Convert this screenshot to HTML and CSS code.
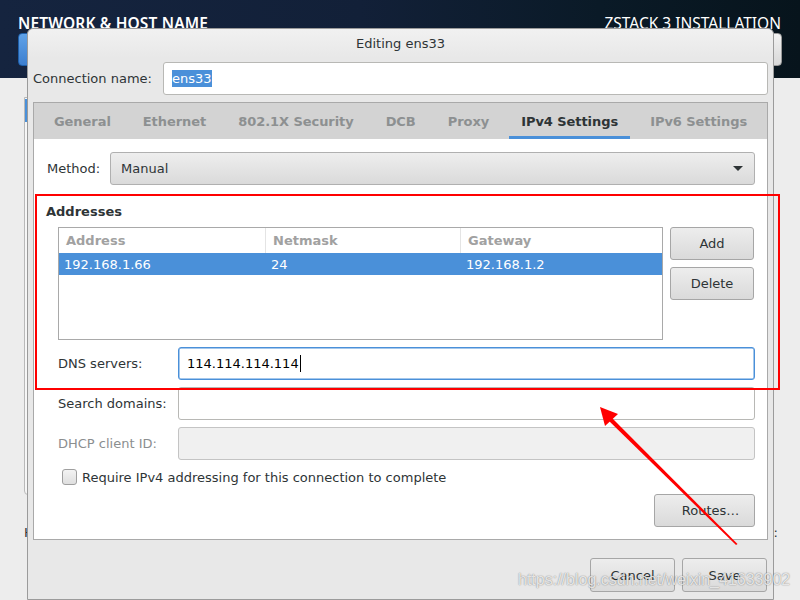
FILE: index.html
```html
<!DOCTYPE html>
<html>
<head>
<meta charset="utf-8">
<title>Editing ens33</title>
<link rel="stylesheet" href="styles.css">
</head>
<body>
<div class="desktop">
  <header class="topbar">
    <div class="topbar-row">
      <h1 class="spoke-title">NETWORK &amp; HOST NAME</h1>
      <span class="product">ZSTACK 3 INSTALLATION</span>
    </div>
    <div class="topbar-row2">
      <button class="done-btn">Done</button>
      <button class="kbd-btn">us</button>
    </div>
  </header>
  <main class="spoke">
    <div class="devlist"><div class="devsel"></div></div>
    <div class="hostrow"><span>Host name:</span><span>Current host name:</span></div>
  </main>
</div>

<div class="dialog">
  <div class="titlebar">Editing ens33</div>
  <div class="dlg-body">
    <div class="conn-row">
      <span class="conn-label">Connection name:</span>
      <div class="entry"><span class="sel-text">ens33</span></div>
    </div>

    <div class="notebook">
      <div class="tabs">
        <div class="tab">General</div>
        <div class="tab">Ethernet</div>
        <div class="tab">802.1X Security</div>
        <div class="tab">DCB</div>
        <div class="tab">Proxy</div>
        <div class="tab active">IPv4 Settings</div>
        <div class="tab">IPv6 Settings</div>
      </div>
      <div class="page">
        <div class="method-row">
          <span class="method-label">Method:</span>
          <div class="combo"><span>Manual</span><span class="combo-arrow"></span></div>
        </div>

        <div class="addr-title">Addresses</div>
        <div class="addr-area">
          <div class="addr-table">
            <div class="thead">
              <div class="th c1">Address</div>
              <div class="th c2">Netmask</div>
              <div class="th c3">Gateway</div>
            </div>
            <div class="trow selected">
              <div class="td c1">192.168.1.66</div>
              <div class="td c2">24</div>
              <div class="td c3">192.168.1.2</div>
            </div>
          </div>
          <div class="side-btns">
            <button class="btn">Add</button>
            <button class="btn">Delete</button>
          </div>
        </div>

        <div class="form-rows">
          <div class="form-row">
            <span class="form-label">DNS servers:</span>
            <div class="entry focus"><span>114.114.114.114</span><span class="caret"></span></div>
          </div>
          <div class="form-row">
            <span class="form-label">Search domains:</span>
            <div class="entry"></div>
          </div>
          <div class="form-row">
            <span class="form-label disabled">DHCP client ID:</span>
            <div class="entry disabled-entry"></div>
          </div>
        </div>

        <div class="check-row">
          <span class="checkbox"></span>
          <span>Require IPv4 addressing for this connection to complete</span>
        </div>

        <div class="routes-row">
          <button class="btn routes-btn">Routes…</button>
        </div>
      </div>
    </div>

    <div class="actions">
      <button class="btn action-btn">Cancel</button>
      <button class="btn action-btn">Save</button>
    </div>
  </div>
</div>

<div class="red-box"></div>
<svg class="arrow" width="800" height="600" viewBox="0 0 800 600">
  <polygon points="737.5,544 736,545 608,420 611,417" fill="#ff0000"/>
  <polygon points="600,407 618,414 605,426" fill="#ff0000"/>
</svg>
<div class="watermark">https://blog.csdn.net/weixin_41633902</div>
</body>
</html>
```

FILE: styles.css
```css
html, body {
  margin: 0;
  padding: 0;
}

body {
  width: 800px;
  height: 600px;
  overflow: hidden;
  position: relative;
  font-family: "DejaVu Sans", sans-serif;
  font-size: 13px;
  color: #2e3436;
  background: #ececec;
}

button {
  font-family: "DejaVu Sans", sans-serif;
  font-size: 13px;
  color: #2e3436;
}

/* ---------- background installer screen ---------- */
.desktop {
  height: 600px;
  display: flex;
  flex-direction: column;
}

.topbar {
  height: 78px;
  box-sizing: border-box;
  padding: 12px 18px 0 18px;
  background: linear-gradient(90deg, #15243f 0%, #122038 45%, #0a1a27 75%, #07141c 100%);
  color: #ffffff;
}

.topbar-row {
  display: flex;
  justify-content: space-between;
  align-items: center;
  height: 21px;
}

.spoke-title {
  margin: 0;
  font-family: "Noto Sans", sans-serif;
  font-weight: 600;
  font-size: 15.5px;
  letter-spacing: 0.15px;
}

.product {
  font-family: "Noto Sans", sans-serif;
  font-size: 15.5px;
  margin-right: 1px;
}

.topbar-row2 {
  display: flex;
  justify-content: space-between;
}

.done-btn {
  width: 80px;
  height: 33px;
  border: 1px solid #1d5ea8;
  border-radius: 4px;
  background: linear-gradient(#5fa2e8, #3d7fcf);
  color: #fff;
}

.kbd-btn {
  width: 90px;
  height: 33px;
  border: 1px solid #999;
  border-radius: 4px;
  background: linear-gradient(#f2f2f2, #d8d8d8);
}

.spoke {
  flex: 1;
  padding: 19px 18px 0 24px;
  background: #ededed;
}

.devlist {
  width: 300px;
  height: 398px;
  box-sizing: border-box;
  border: 1px solid #b9b9b9;
  border-radius: 0 0 4px 4px;
  background: #f6f6f6;
  padding-top: 1px;
}

.devsel {
  height: 23px;
  background: #4a90d9;
}

.hostrow {
  margin-top: 30px;
  display: flex;
  justify-content: space-between;
  padding-right: 4px;
}

/* ---------- dialog window ---------- */
.dialog {
  position: absolute;
  left: 27px;
  top: 28px;
  width: 747px;
  height: 572px;
  box-sizing: border-box;
  border: 1px solid #9b9b9b;
  border-radius: 6px 6px 0 0;
  background: #e8e8e8;
  display: flex;
  flex-direction: column;
}

.titlebar {
  height: 29px;
  display: flex;
  align-items: center;
  justify-content: center;
  border-radius: 6px 6px 0 0;
  background: linear-gradient(#f1f1f1, #e8e8e8);
  color: #2e3436;
}

.dlg-body {
  padding: 4px 5px 0 5px;
  display: flex;
  flex-direction: column;
}

.conn-row {
  display: flex;
  align-items: center;
  height: 33px;
}

.conn-label {
  width: 130px;
  flex: none;
}

.entry {
  flex: 1;
  height: 33px;
  box-sizing: border-box;
  border: 1px solid #b8b8b5;
  border-radius: 3px;
  background: #ffffff;
  padding: 0 8px;
  display: flex;
  align-items: center;
  color: #000;
}

.sel-text {
  background: #4a90d9;
  color: #ffffff;
  padding: 1px 0 1px 0;
  line-height: 15px;
}

.entry.focus {
  border-color: #4a90d9;
  box-shadow: inset 0 0 0 0.5px #4a90d9;
}

.caret {
  display: inline-block;
  width: 1px;
  height: 17px;
  background: #000;
  margin-left: 1px;
}

.entry.disabled-entry {
  background: #f0f0f0;
  border-color: #c4c4c4;
}

/* ---------- notebook ---------- */
.notebook {
  margin-top: 7px;
  border: 1px solid #a9a9a9;
  background: #ffffff;
}

.tabs {
  display: flex;
  gap: 8px;
  padding-left: 8px;
  height: 36px;
  background: #d3d3d3;
}

.tab {
  padding: 3px 12px 0 12px;
  box-sizing: border-box;
  display: flex;
  align-items: center;
  font-weight: bold;
  color: #8d9091;
  letter-spacing: -0.06px;
  border-bottom: 3px solid transparent;
}

.tab.active {
  color: #2e3436;
  border-bottom-color: #4a90d9;
}

.page {
  padding: 13px 12px 12px 13px;
}

.method-row {
  display: flex;
  align-items: center;
}

.method-label {
  width: 63px;
  flex: none;
}

.combo {
  flex: 1;
  height: 33px;
  box-sizing: border-box;
  border: 1px solid #b0b0b0;
  border-radius: 3px;
  background: linear-gradient(#eeeeee, #dadada);
  display: flex;
  align-items: center;
  justify-content: space-between;
  padding: 0 10px;
}

.combo-arrow {
  width: 0;
  height: 0;
  border-left: 5px solid transparent;
  border-right: 5px solid transparent;
  border-top: 5px solid #2e3436;
  margin-right: 1px;
}

.addr-title {
  margin-top: 17px;
  margin-left: -1px;
  line-height: 20px;
  font-weight: bold;
}

.addr-area {
  margin: 5px 0 0 11px;
  display: flex;
  gap: 7px;
}

.addr-table {
  width: 605px;
  height: 113px;
  box-sizing: border-box;
  border: 1px solid #a9a9a9;
  background: #ffffff;
}

.thead {
  display: flex;
  height: 25px;
}

.th {
  box-sizing: border-box;
  padding-left: 7px;
  display: flex;
  align-items: center;
  font-weight: bold;
  color: #a1a1a1;
  border-right: 1px solid #e4e4e4;
}

.th.c3 {
  border-right: none;
}

.c1 { width: 207px; }
.c2 { width: 195px; }
.c3 { flex: 1; }

.trow {
  display: flex;
  height: 22px;
}

.trow.selected {
  background: #4a90d9;
  color: #ffffff;
}

.td {
  box-sizing: border-box;
  padding-left: 5px;
  display: flex;
  align-items: center;
}

.side-btns {
  width: 84px;
  display: flex;
  flex-direction: column;
  gap: 7px;
}

.btn {
  height: 33px;
  box-sizing: border-box;
  border: 1px solid #a6a6a6;
  border-radius: 3px;
  background: linear-gradient(#ededed, #dadada);
  padding: 0;
}

.form-rows {
  margin: 7px 0 0 11px;
  display: flex;
  flex-direction: column;
  gap: 7px;
}

.form-row {
  display: flex;
  align-items: center;
}

.form-label {
  width: 120px;
  flex: none;
}

.form-label.disabled {
  color: #8b8e8f;
}

.check-row {
  margin: 9px 0 0 15px;
  height: 16px;
  display: flex;
  align-items: center;
  gap: 5px;
}

.checkbox {
  width: 15px;
  height: 16px;
  box-sizing: border-box;
  border: 1px solid #9f9f9f;
  border-radius: 3px;
  background: linear-gradient(#f3f3f3, #dfdfdf);
}

.routes-row {
  margin-top: 9px;
  display: flex;
  justify-content: flex-end;
}

.routes-btn {
  width: 101px;
  padding-left: 12px;
}

.actions {
  margin-top: 18px;
  padding-right: 1px;
  display: flex;
  justify-content: flex-end;
  gap: 7px;
}

.action-btn {
  width: 85px;
  height: 34px;
}

/* ---------- annotations ---------- */
.red-box {
  position: absolute;
  left: 35px;
  top: 194px;
  width: 745px;
  height: 196px;
  box-sizing: border-box;
  border: 2px solid #ff0000;
}

.arrow {
  position: absolute;
  left: 0;
  top: 0;
}

.watermark {
  position: absolute;
  left: 518px;
  top: 570px;
  font-family: "Liberation Sans", Arial, sans-serif;
  font-size: 16px;
  line-height: 20px;
  color: rgba(255, 255, 255, 0.8);
  text-shadow: 0 0 1px rgba(0, 0, 0, 0.4), 0 0 2px rgba(0, 0, 0, 0.2);
  white-space: nowrap;
}
```
